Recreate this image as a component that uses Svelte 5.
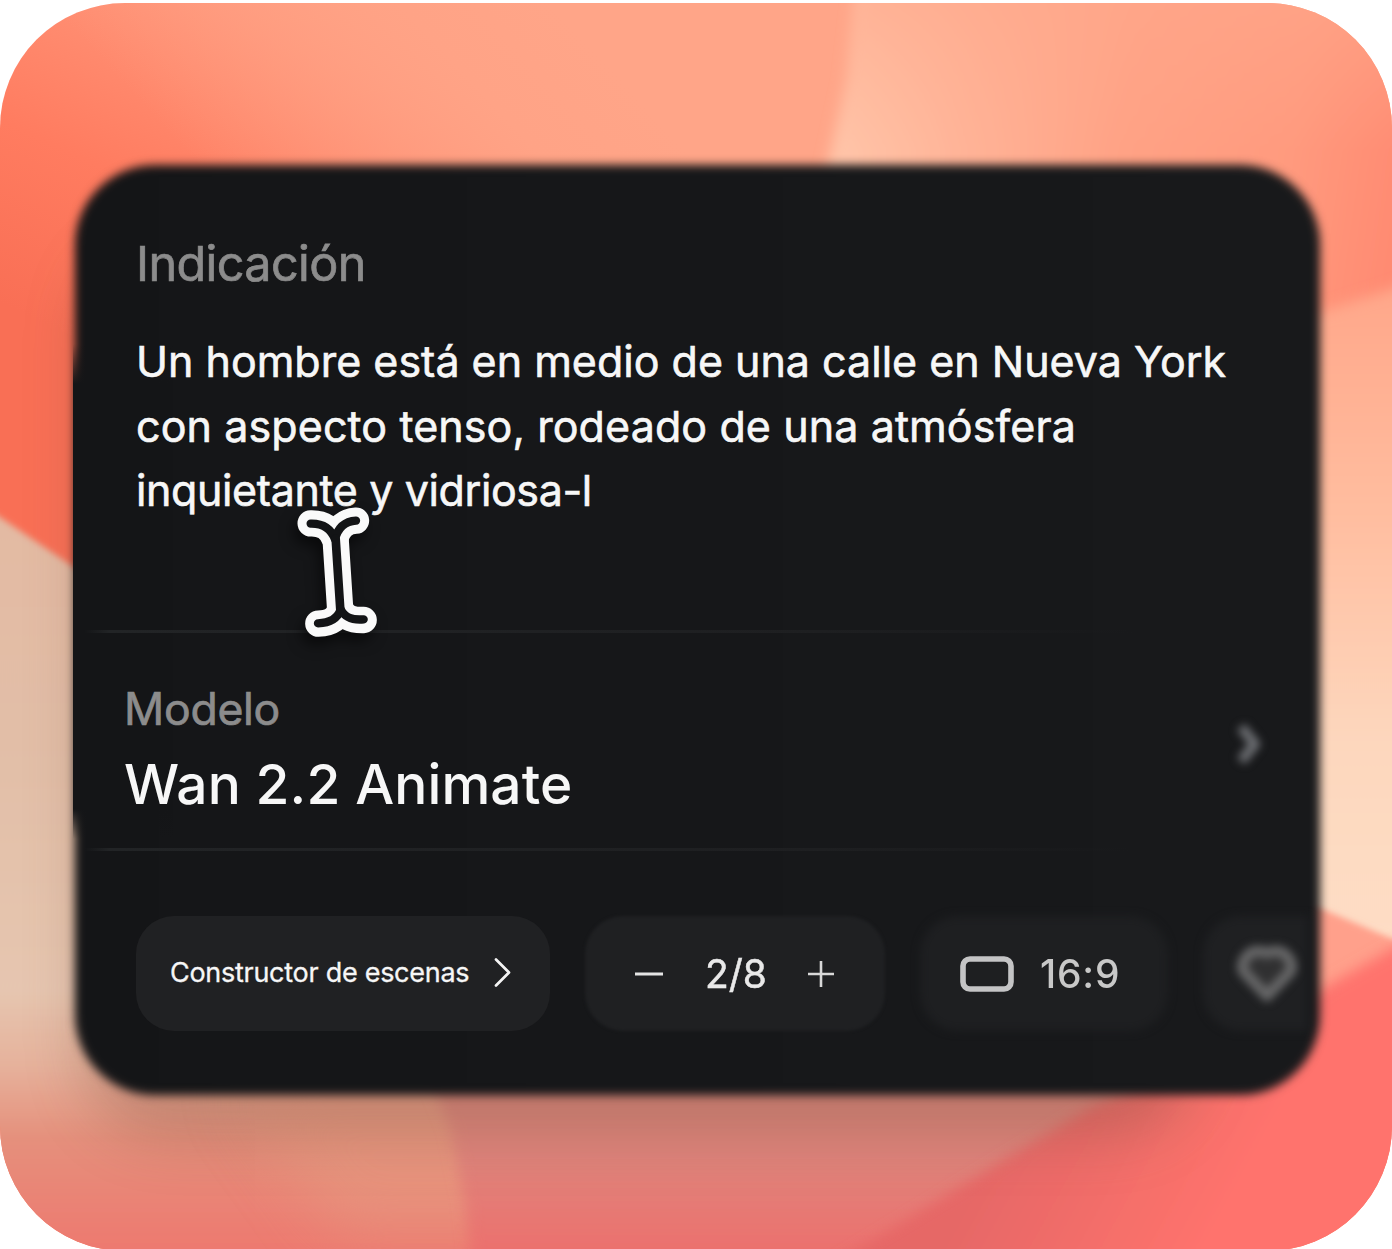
<script>
  let prompt = [
    'Un hombre está en medio de una calle en Nueva York',
    'con aspecto tenso, rodeado de una atmósfera',
    'inquietante y vidriosa-l'
  ];
</script>

<main class="frame">
  <svg class="wallpaper" viewBox="0 0 1392 1249" preserveAspectRatio="none" aria-hidden="true">
    <defs>
      <linearGradient id="topLeft" gradientUnits="userSpaceOnUse" x1="60" y1="330" x2="260" y2="-100">
        <stop offset="0" stop-color="#f96f55" />
        <stop offset=".35" stop-color="#ff7c60" />
        <stop offset=".75" stop-color="#ff9579" />
        <stop offset="1" stop-color="#ffa386" />
      </linearGradient>
      <linearGradient id="topFade" gradientUnits="userSpaceOnUse" x1="250" y1="220" x2="520" y2="-30">
        <stop offset="0" stop-color="#ffa184" stop-opacity="0" />
        <stop offset=".7" stop-color="#ffa386" />
        <stop offset="1" stop-color="#ffa588" />
      </linearGradient>
      <linearGradient id="topRight" gradientUnits="userSpaceOnUse" x1="840" y1="150" x2="1392" y2="230">
        <stop offset="0" stop-color="#ffc4a8" />
        <stop offset=".22" stop-color="#ffb397" />
        <stop offset=".5" stop-color="#ffa285" />
        <stop offset=".8" stop-color="#ff9a7e" />
        <stop offset="1" stop-color="#ff8b72" />
      </linearGradient>
      <linearGradient id="topTint" x1="0" x2="0" y1="0" y2="1">
        <stop offset="0" stop-color="#ffa78a" stop-opacity=".85" />
        <stop offset="1" stop-color="#ffa78a" stop-opacity="0" />
      </linearGradient>
      <linearGradient id="right" x1="0" x2="0" y1="0" y2="1">
        <stop offset="0" stop-color="#ffa487" />
        <stop offset=".3" stop-color="#ffbc9e" />
        <stop offset=".6" stop-color="#fdd7bd" />
        <stop offset="1" stop-color="#fee1ca" />
      </linearGradient>
      <linearGradient id="beige" x1="0" x2="0" y1="0" y2="1">
        <stop offset="0" stop-color="#e3b9a2" />
        <stop offset=".35" stop-color="#e2bfa8" />
        <stop offset=".62" stop-color="#e6c6b0" />
        <stop offset=".71" stop-color="#e6b29c" />
        <stop offset=".8" stop-color="#e5907c" />
        <stop offset=".93" stop-color="#ed7a70" />
      </linearGradient>
      <linearGradient id="bottomMid" x1="0" x2="0" y1="0" y2="1">
        <stop offset="0" stop-color="#dc8e82" />
        <stop offset=".45" stop-color="#e0827a" />
        <stop offset=".8" stop-color="#ec706d" />
      </linearGradient>
      <linearGradient id="red" gradientUnits="userSpaceOnUse" x1="1010" y1="1130" x2="1210" y2="1240">
        <stop offset="0" stop-color="#e66866" />
        <stop offset="1" stop-color="#ff736d" />
      </linearGradient>
      <filter id="b3" x="-20%" y="-20%" width="140%" height="140%"><feGaussianBlur stdDeviation="3" /></filter>
      <filter id="b7" x="-20%" y="-20%" width="140%" height="140%"><feGaussianBlur stdDeviation="7" /></filter>
      <filter id="b24" x="-40%" y="-30%" width="180%" height="160%"><feGaussianBlur stdDeviation="30" /></filter>
    </defs>
    <rect width="1392" height="1249" fill="url(#topLeft)" />
    <rect x="0" width="860" height="300" fill="url(#topFade)" />
    <g filter="url(#b7)">
      <path d="M862 -60 L846 80 L822 190 V420 H1460 V-60Z" fill="url(#topRight)" />
      <path d="M862 -60 L859 0 L846 80 L830 150 H1460 V-60Z" fill="url(#topTint)" />
    </g>
    <path d="M1200 350 L1392 288 L1460 262 V1060 H1200Z" fill="url(#right)" filter="url(#b7)" />
    <path d="M-60 478 L0 516 L80 570 L200 640 V1080 L510 1080 L510 1300 H-60Z" fill="url(#beige)" filter="url(#b3)" />
    <path d="M230 1080 H520 V1230 H340Z" fill="#e69a80" opacity=".6" filter="url(#b24)" />
    <path d="M420 1050 L450 1125 L465 1200 L475 1300 H1200 V1050Z" fill="url(#bottomMid)" filter="url(#b7)" />
    <path d="M1240 880 L1325 908 L1400 940 V1060 H1240Z" fill="#ffa08b" filter="url(#b3)" />
    <path d="M1200 1060 L1325 985 L1400 942 L1460 920 V1300 H770 L1090 1105Z" fill="url(#red)" filter="url(#b7)" />
    <rect x="85" y="245" width="1110" height="885" rx="80" fill="#7a4f3c" opacity=".34" filter="url(#b24)" />
  </svg>

  <section class="card">
    <div class="surface"></div>
    <div class="edge"></div>

    <div class="prompt">
      <h2 class="label indication">Indicación</h2>
      <p class="text">
        {#each prompt as line, i}<span class="line l{i}">{line}</span>{/each}
      </p>
      <svg class="cursor" viewBox="0 0 360 510" aria-hidden="true">
        <g fill="none" stroke-linecap="round" stroke-linejoin="round">
          <g stroke="#fafafa" stroke-width="79">
            <path d="M92 100C128 99 152 114 165 148C174 112 195 94 228 92" />
            <path d="M167 150L180 350" />
            <path d="M115 401C152 400 173 386 182 358C195 383 216 391 251 390" />
          </g>
          <g stroke="#131416" stroke-width="25">
            <path d="M92 101C128 100 152 114 165 148C174 112 195 94 228 92" />
            <path d="M167 146L181 360" stroke-width="26" />
            <path d="M114 400C152 399 173 386 182 358C195 383 216 391 251 388" />
          </g>
        </g>
      </svg>
    </div>

    <div class="model">
      <div class="names">
        <h2 class="label model-label">Modelo</h2>
        <p class="name">Wan 2.2 Animate</p>
      </div>
      <svg class="more" viewBox="0 0 60 80" aria-hidden="true">
        <path d="M23 23L37 40L23 57" fill="none" stroke="#6c6e72" stroke-width="10" stroke-linejoin="round" />
      </svg>
    </div>

    <div class="tools">
      <button class="chip scenes">
        <span class="scenes-text">Constructor de escenas</span>
        <svg width="18" height="30" viewBox="0 0 18 30" aria-hidden="true">
          <path d="M2 2.5L15 15.5L2 28.5" fill="none" stroke="#f4f4f4" stroke-width="2.7" stroke-linecap="round" stroke-linejoin="round" />
        </svg>
      </button>
      <div class="chip count">
        <svg width="28" height="28" viewBox="0 0 28 28" aria-hidden="true"><path d="M0 14H28" stroke="#e4e4e4" stroke-width="3" /></svg>
        <span class="count-text">2/8</span>
        <svg width="26" height="28" viewBox="0 0 26 28" aria-hidden="true"><path d="M0 14H26M13 1V27" stroke="#d8d8d8" stroke-width="2.6" /></svg>
      </div>
      <div class="chip ratio">
        <svg width="54" height="36" viewBox="0 0 54 36" aria-hidden="true"><rect x="3" y="3" width="48" height="30" rx="7" fill="none" stroke="#c4c4c5" stroke-width="5.6" /></svg>
        <span class="ratio-text">16:9</span>
      </div>
      <div class="chip like">
        <svg width="84" height="84" viewBox="0 0 84 84" aria-hidden="true">
          <path d="M42 64L19 40C14 32 22 20 32 19C37 19 40 20 42 21C44 20 47 19 52 19C62 20 70 32 65 40Z" fill="#303031" stroke="#676768" stroke-width="11" stroke-linejoin="round" />
        </svg>
      </div>
    </div>
  </section>
</main>

<style>
  :global(body) {
    background: #fff;
    overflow: hidden;
  }
  .frame {
    position: relative;
    box-sizing: border-box;
    width: 1392px;
    height: 1248px;
    margin-top: 3px;
    padding: 161px 73px 0;
    border-radius: 125px;
    overflow: hidden;
    font-family: Inter, sans-serif;
  }
  .wallpaper {
    position: absolute;
    inset: -3px 0 auto;
    width: 1392px;
    height: 1252px;
  }
  h2, p {
    margin: 0;
    font-weight: 400;
  }
  .card {
    position: relative;
    display: grid;
    grid-template-rows: 469px 218px 244px;
    width: 1247px;
    color: #f7f7f7;
  }
  .surface {
    position: absolute;
    inset: 1px 0 0 2px;
    border-radius: 80px;
    background: linear-gradient(90deg, #141517, #17181a 75%, #18191b);
    filter: blur(5px);
  }
  .edge {
    position: absolute;
    left: 0;
    top: 180px;
    width: 100px;
    height: 495px;
    background: linear-gradient(transparent, #141517 40px calc(100% - 30px), transparent);
  }
  .prompt, .model, .tools {
    position: relative;
    box-sizing: border-box;
  }
  .prompt, .model {
    border-bottom: 3px solid transparent;
    border-image: linear-gradient(90deg, transparent 1%, #222426 3%, #1e1f21 60%, transparent 85%) 1;
  }
  .prompt {
    padding: 70px 0 0 63px;
  }
  .label {
    color: #8c8c8c;
    white-space: nowrap;
  }
  .indication {
    font-size: 48.5px;
    line-height: 60px;
    letter-spacing: -0.6px;
    -webkit-text-stroke: 0.7px #8c8c8c;
  }
  .text {
    display: flex;
    flex-direction: column;
    margin-top: 35px;
    font-size: 43px;
    line-height: 64.5px;
    -webkit-text-stroke: 0.6px #f7f7f7;
  }
  .l1 {
    letter-spacing: 0.1px;
  }
  .l2 {
    letter-spacing: -0.38px;
  }
  .line, .name, .chip span {
    white-space: nowrap;
  }
  .cursor {
    position: absolute;
    left: 207px;
    top: 326px;
    width: 120px;
    height: 170px;
    z-index: 1;
    filter: drop-shadow(-4px 8px 7px rgb(0 0 0 / 0.55));
  }
  .model {
    display: flex;
    justify-content: space-between;
    padding: 48px 42px 0 51px;
  }
  .model-label {
    font-size: 44.5px;
    line-height: 56px;
    letter-spacing: -0.25px;
    -webkit-text-stroke: 0.7px #8c8c8c;
  }
  .name {
    font-size: 55px;
    line-height: 70px;
    font-weight: 500;
    margin-top: 12px;
    letter-spacing: 0.1px;
  }
  .more {
    width: 60px;
    height: 80px;
    margin-top: 23px;
    filter: blur(4px);
  }
  .tools {
    display: flex;
    gap: 35px;
    margin-right: 4px;
    padding: 65px 0 0 63px;
    overflow: hidden;
    mask-image: linear-gradient(90deg, #000 calc(100% - 16px), transparent);
  }
  .chip {
    position: relative;
    display: flex;
    align-items: center;
    flex: none;
    box-sizing: border-box;
    height: 115px;
    padding: 0;
    border: 0;
    background: none;
    color: inherit;
    font: inherit;
  }
  .chip::before {
    content: '';
    position: absolute;
    inset: 0;
    border-radius: 38px;
    background: #202123;
  }
  .chip > * {
    position: relative;
  }
  .scenes {
    width: 414px;
    padding: 0 0 3px 34px;
    gap: 25px;
    font-size: 27px;
  }
  .scenes-text {
    letter-spacing: -0.28px;
    -webkit-text-stroke: 0.3px #f4f4f4;
  }
  .count {
    width: 300px;
    padding-left: 50px;
    font-size: 39px;
    color: #e9e9e9;
  }
  .count::before {
    background: #1f2022;
    filter: blur(1.5px);
  }
  .count-text {
    margin: 0 41px 0 42px;
    -webkit-text-stroke: 0.5px #e9e9e9;
  }
  .ratio {
    width: 248px;
    padding-left: 40px;
    gap: 26px;
    font-size: 39px;
    color: #c8c8c8;
  }
  .ratio-text {
    font-weight: 500;
    letter-spacing: 0.8px;
  }
  .ratio::before {
    background: #1e1f21;
    filter: blur(4px);
  }
  .like {
    width: 150px;
    padding-left: 22px;
  }
  .like::before {
    background: #1f2022;
    filter: blur(4px);
  }
  .like svg {
    filter: blur(4px);
  }
</style>
